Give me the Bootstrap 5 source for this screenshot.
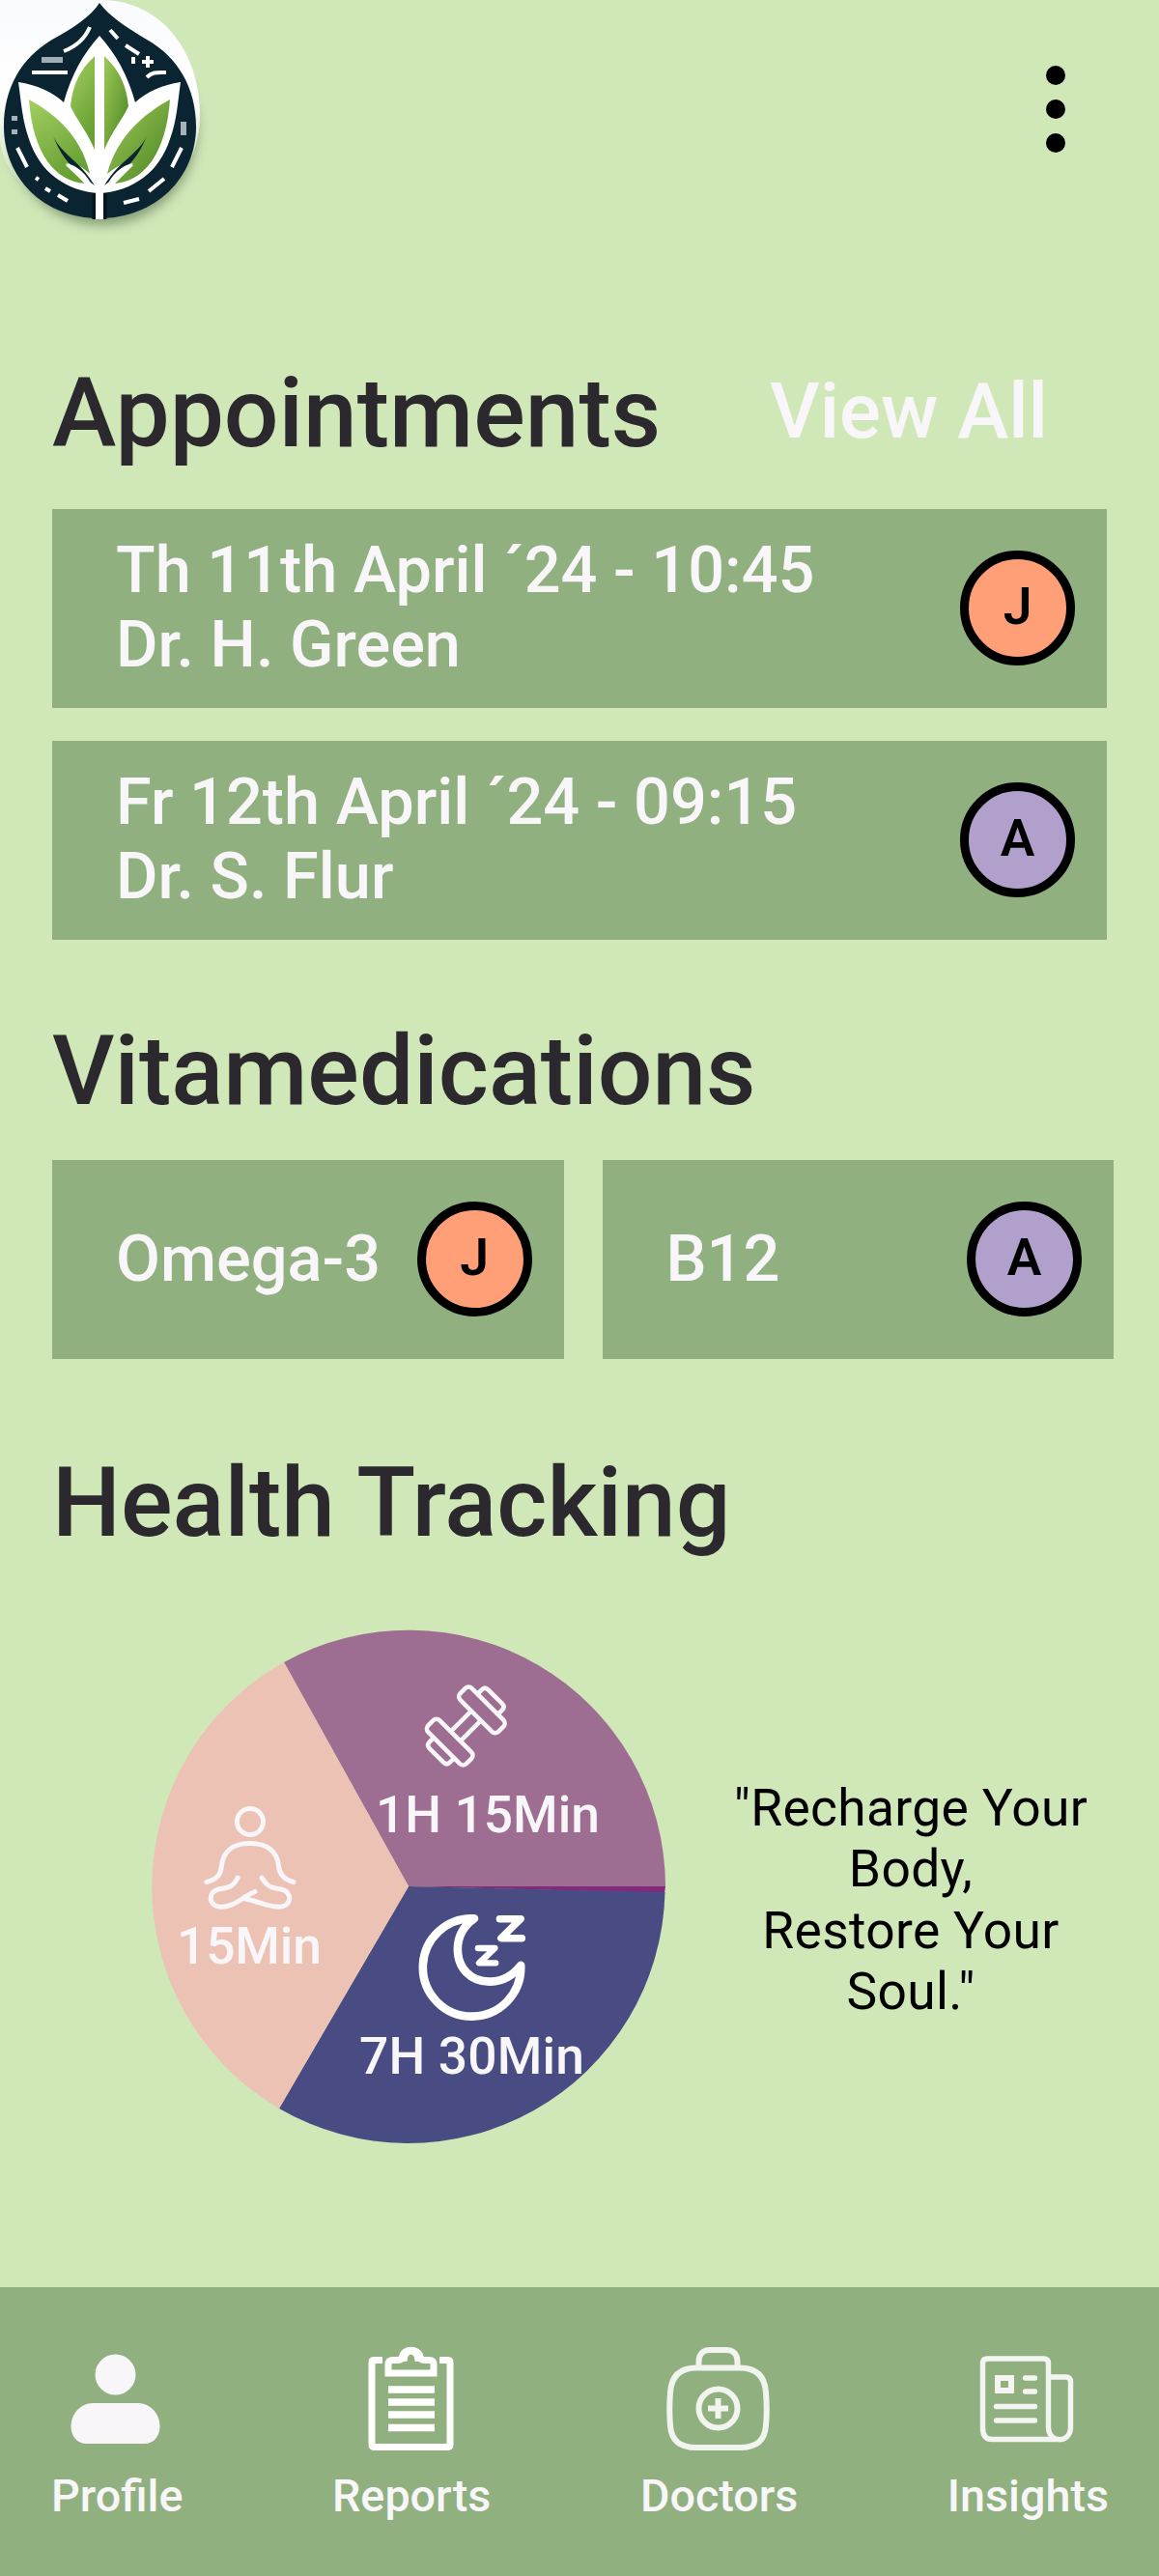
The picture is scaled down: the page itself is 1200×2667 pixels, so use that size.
<!DOCTYPE html>
<html lang="en">
<head>
<meta charset="utf-8">
<meta name="viewport" content="width=device-width, initial-scale=1">
<title>Health Dashboard</title>
<link href="https://cdn.jsdelivr.net/npm/bootstrap@5.3.0/dist/css/bootstrap.min.css" rel="stylesheet">
<style>
  body { background: #d0e7b8; font-family: Roboto, "Liberation Sans", sans-serif; color: #000; }
  .screen { width: 1200px; height: 2667px; overflow: hidden; }
  .topbar { height: 375px; }
  .brand-logo { width: 220px; height: 250px; display: block; }
  .menu-dots { margin: 62px 97px 0 0; width: 20px; }
  .section-title { font-size: 100px; font-weight: 500; line-height: 113px; color: #2b282e; margin: 0; white-space: nowrap; }
  .appts-head { height: 152px; padding: 0 115px 0 54px; }
  .appts-head .section-title { margin-top: -4px; }
  .vita-head { height: 228px; padding: 79px 0 0 54px; }
  .health-head { height: 277px; padding: 92px 0 0 54px; }
  .view-all { font-size: 80px; font-weight: 500; line-height: 94px; color: #f8f6f9; text-decoration: none; white-space: nowrap; margin-top: 4px; }
  .appts { margin: 0 54px; gap: 34px; }
  .tile { background: #90b07f; height: 206px; padding: 0 33px 2px 66px; color: #f8f6f9; font-size: 66.7px; font-weight: 500; line-height: 76.7px; white-space: nowrap; }
  .vita { margin: 0 47px 0 54px; gap: 40px; }
  .avatar { width: 119px; height: 119px; border: 9px solid #000; color: #000; font-size: 53.3px; font-weight: 600; line-height: 1; }
  .avatar-j { background: #ff9f78; }
  .avatar-a { background: #b0a0cb; }
  .pie { width: 540px; height: 540px; display: block; margin-left: 153px; }
  .quote { width: 400px; margin: 27px 57px 0 0; font-size: 53.3px; line-height: 63.4px; letter-spacing: .35px; text-align: center; }
  .pie-label { font-size: 53.3px; font-weight: 500; fill: #f8f6f9; }
  .tabbar { background: #90b07f; height: 299px; padding: 52px 52px 0 53px; }
  .tab-item { color: #f8f6f9; font-size: 46.7px; font-weight: 500; line-height: 56px; text-decoration: none; }
  .tab-item svg { width: 120px; height: 120px; display: block; margin-bottom: 16px; }
</style>
</head>
<body>
<main class="screen d-flex flex-column">
  <header class="topbar d-flex justify-content-between align-items-start">
    <svg class="brand-logo" viewBox="0 0 220 250">
      <defs>
        <linearGradient id="leaf" x1="0" y1="0" x2="1" y2="1"><stop offset="0" stop-color="#9cca58"/><stop offset="1" stop-color="#4c8322"/></linearGradient>
        <linearGradient id="leafLight" x1="0" y1="0" x2=".4" y2="1"><stop offset="0" stop-color="#a3cf60"/><stop offset="1" stop-color="#68a033"/></linearGradient>
        <linearGradient id="halo" x1="0" y1="0" x2="0" y2="1"><stop offset="0" stop-color="#fafbfd"/><stop offset=".45" stop-color="#fff"/><stop offset=".9" stop-color="#fff" stop-opacity="0"/></linearGradient>
        <filter id="soft" x="-20%" y="-20%" width="140%" height="140%"><feGaussianBlur stdDeviation="6"/></filter>
      </defs>
      <ellipse cx="106" cy="134" rx="98" ry="99" fill="#6d8560" opacity=".75" filter="url(#soft)"/>
      <path d="M0 0H104C166 0 207 52 207 120C207 180 160 225 103 225C50 225 5 190 0 145Z" fill="url(#halo)"/>
      <path d="M103 3C112 16 132 29 152 41C184 59 203 91 203 131C203 184 161 226 103 226C45 226 4 184 4 131C4 91 22 60 54 41C76 29 94 17 103 3Z" fill="#0b2431"/>
      <path d="M103 37C86 56 74 77 66 106C54 95 38 88 19 85C22 106 23 125 30 144C41 178 68 198 103 200C138 198 165 178 176 144C183 125 184 106 187 85C168 88 152 95 140 106C132 77 120 56 103 37Z" fill="#fff"/>
      <path d="M98 58C82 73 75 89 73 110C80 125 90 136 98 155Z" fill="url(#leafLight)"/>
      <path d="M108 58C124 73 131 89 133 110C126 125 116 136 108 155Z" fill="url(#leaf)"/>
      <path d="M30 103C52 115 84 138 93 180C82 170 74 167 68 171L88 190C58 188 34 160 30 103Z" fill="url(#leafLight)"/>
      <path d="M176 103C154 115 122 138 111 180C124 170 131 167 138 171L119 190C148 188 172 160 176 103Z" fill="url(#leaf)"/>
      <path d="M54 137C59 157 82 165 98 192C78 178 62 163 54 137ZM153 137C148 157 124 165 108 192C128 178 145 163 153 137Z" fill="#0b2431"/>
      <path d="M68 169C80 171 90 180 97 195L88 191C82 182 75 176 68 169ZM138 169C126 171 116 180 109 195L118 191C124 182 131 176 138 169Z" fill="#fff"/>
      <path d="M103 200V227" stroke="#06151e" stroke-width="15"/>
      <path d="M103 45V227" stroke="#fff" stroke-width="8"/>
      <g fill="none" stroke="#fff" stroke-width="4">
        <path d="M93 28C88 40 79 48 66 53M33 75H70M114 31L122 40M130 47L144 56M152 80C158 74 163 75 172 75"/>
        <path d="M138 59V66M153 58V70M147 64H159"/>
        <path d="M43 62H65" stroke="#9faeb4" stroke-width="6"/>
        <path d="M18 153L28 173M37 184L40 186M47 195L52 198M60 202L70 208M188 153L178 173M170 185L154 198M144 206L128 210"/>
        <path d="M15 120V125M15 134V139M190 126V140" stroke="#a5b2ba" stroke-width="6"/>
      </g>
    </svg>
    <svg class="menu-dots" viewBox="0 0 20 110" width="20" height="110"><circle cx="10" cy="16" r="10"/><circle cx="10" cy="51" r="10"/><circle cx="10" cy="86" r="10"/></svg>
  </header>

  <section>
    <div class="appts-head d-flex justify-content-between align-items-start">
      <h1 class="section-title">Appointments</h1>
      <a class="view-all" href="#">View All</a>
    </div>
    <div class="appts d-flex flex-column">
      <div class="tile d-flex justify-content-between align-items-center">
        <div>Th 11th April ´24 - 10:45<br>Dr. H. Green</div>
        <span class="avatar avatar-j rounded-circle d-flex align-items-center justify-content-center">J</span>
      </div>
      <div class="tile d-flex justify-content-between align-items-center">
        <div>Fr 12th April ´24 - 09:15<br>Dr. S. Flur</div>
        <span class="avatar avatar-a rounded-circle d-flex align-items-center justify-content-center">A</span>
      </div>
    </div>
  </section>

  <section>
    <h2 class="section-title vita-head">Vitamedications</h2>
    <div class="vita d-flex">
      <div class="tile flex-fill w-50 d-flex justify-content-between align-items-center">Omega-3 <span class="avatar avatar-j rounded-circle d-flex align-items-center justify-content-center">J</span></div>
      <div class="tile flex-fill w-50 d-flex justify-content-between align-items-center">B12 <span class="avatar avatar-a rounded-circle d-flex align-items-center justify-content-center">A</span></div>
    </div>
  </section>

  <section>
    <h2 class="section-title health-head">Health Tracking</h2>
    <div class="d-flex justify-content-between align-items-center">
      <svg class="pie" viewBox="154 1684 540 540">
        <path d="M424 1953L295 1721A266 266 0 0 1 690 1953Z" fill="#9d6e92"/>
        <path d="M424 1953H690L689 1960Z" fill="#842a7c"/>
        <path d="M424 1953L689.500 1959A266 266 0 0 1 290 2183Z" fill="#494c82"/>
        <path d="M424 1953L290 2183A266 266 0 0 1 295 1721Z" fill="#ecc2b5"/>
        <!-- dumbbell -->
        <g transform="translate(483.300 1787) rotate(-45)" fill="none" stroke="#f8f6f9" stroke-width="4.600">
          <rect x="15" y="-28" width="17" height="56" rx="5"/>
          <rect x="-32" y="-28" width="17" height="56" rx="5"/>
          <path d="M-15 -7H15M-15 7H15"/>
          <path d="M32 -15H38Q43 -15 43 -10V10Q43 15 38 15H32M-32 -15H-38Q-43 -15 -43 -10V10Q-43 15 -38 15H-32"/>
        </g>
        <!-- meditation -->
        <g transform="translate(140 1670) scale(.357)" fill="none" stroke="#f8f6f9" stroke-width="14" stroke-linecap="round" stroke-linejoin="round">
          <circle cx="336" cy="605" r="38"/>
          <path d="M210 780C243 772 251 756 253 735C257 692 285 668 336 668C387 668 415 692 419 735C421 756 431 772 462 780"/>
          <path d="M300 768C287 793 278 796 245 801C212 808 214 852 252 852C292 852 312 824 350 808"/>
          <path d="M370 768C386 793 396 797 426 801C460 808 458 852 420 852C384 852 362 836 322 829"/>
        </g>
        <!-- moon -->
        <g transform="translate(140 1670) scale(.357)" fill="none" stroke="#fff" stroke-linejoin="round" stroke-linecap="round">
          <path d="M986 886A142 142 0 1 0 1121 1022C1097 1053 1066 1069 1030 1069C976 1069 938 1030 938 975C938 936 955 908 986 886Z" stroke-width="24"/>
          <path d="M1060 887H1121L1064 943H1124" stroke-width="21"/>
          <path d="M997 972H1046L1000 1015H1048" stroke-width="18"/>
        </g>
        <text class="pie-label" x="390" y="1897" textLength="232">1H 15Min</text>
        <text class="pie-label" x="184" y="2033" textLength="150">15Min</text>
        <text class="pie-label" x="373" y="2147" textLength="233">7H 30Min</text>
      </svg>
      <p class="quote">"Recharge Your Body,<br>Restore Your Soul."</p>
    </div>
  </section>

  <nav class="tabbar mt-auto d-flex justify-content-between">
    <a class="tab-item d-flex flex-column align-items-center" href="#">
      <svg viewBox="61.500 2420 120 120" fill="#f8f6f9"><circle cx="120" cy="2458.500" r="21"/><path d="M97 2488H143C157 2488 166 2500 166 2512C166 2522 160 2530 150 2530H90C80 2530 74 2522 74 2512C74 2500 83 2488 97 2488Z"/></svg>
      Profile
    </a>
    <a class="tab-item d-flex flex-column align-items-center" href="#">
      <svg viewBox="367 2420 120 120" fill="none" stroke="#fff" stroke-width="7">
        <path d="M397 2443.500H388Q386 2443.500 386 2446V2531Q386 2533.500 389 2533.500H464Q467 2533.500 467 2531V2446Q467 2443.500 465 2443.500H456"/>
        <path d="M403 2457V2448Q403 2443.500 408 2443.500H413Q417 2443.500 417.500 2440C419 2431 434 2431 436 2440Q436.500 2443.500 440 2443.500H445Q450 2443.500 450 2448V2457Z"/>
        <path d="M417 2443.500H421Q422 2436 426.500 2436T432 2443.500H437" stroke-width="3"/>
        <path d="M403 2474H451M403 2487H451M403 2500H451M403 2513.500H451" stroke-width="7.500"/>
      </svg>
      Reports
    </a>
    <a class="tab-item d-flex flex-column align-items-center" href="#">
      <svg viewBox="685 2420 120 120" fill="none" stroke="#f2f4ef" stroke-width="6">
        <path d="M721 2451.500H766C784 2451.500 792 2461 793 2477C794 2489 794 2500 793 2511C792 2527 783 2534 766 2534H721C704 2534 695 2527 694 2511C693 2500 693 2489 694 2477C695 2461 703 2451.500 721 2451.500Z"/>
        <path d="M723.500 2451V2445C723.500 2437 728 2433 735 2433H752C759 2433 763.500 2437 763.500 2445V2451"/>
        <circle cx="743.500" cy="2493.500" r="20"/>
        <path d="M743.500 2483V2504M733 2493.500H754"/>
      </svg>
      Doctors
    </a>
    <a class="tab-item d-flex flex-column align-items-center" href="#">
      <svg viewBox="1004.500 2420 120 120" fill="none" stroke="#f4f5f2" stroke-width="5.400" stroke-linejoin="round">
        <path d="M1097 2525.500H1028Q1018 2525.500 1018 2514V2447Q1018 2442 1023 2442H1081Q1086 2442 1086 2447V2513C1086 2530 1109 2530 1109 2513V2466Q1109 2461 1104 2461H1086"/>
        <rect x="1033.500" y="2462" width="14" height="13" stroke-width="6" stroke-linejoin="miter"/>
        <path d="M1062 2462H1072M1062 2476H1072M1032 2491.500H1072M1032 2506H1072" stroke-linecap="round"/>
      </svg>
      Insights
    </a>
  </nav>
</main>
<script src="https://cdn.jsdelivr.net/npm/bootstrap@5.3.0/dist/js/bootstrap.bundle.min.js"></script>
</body>
</html>
